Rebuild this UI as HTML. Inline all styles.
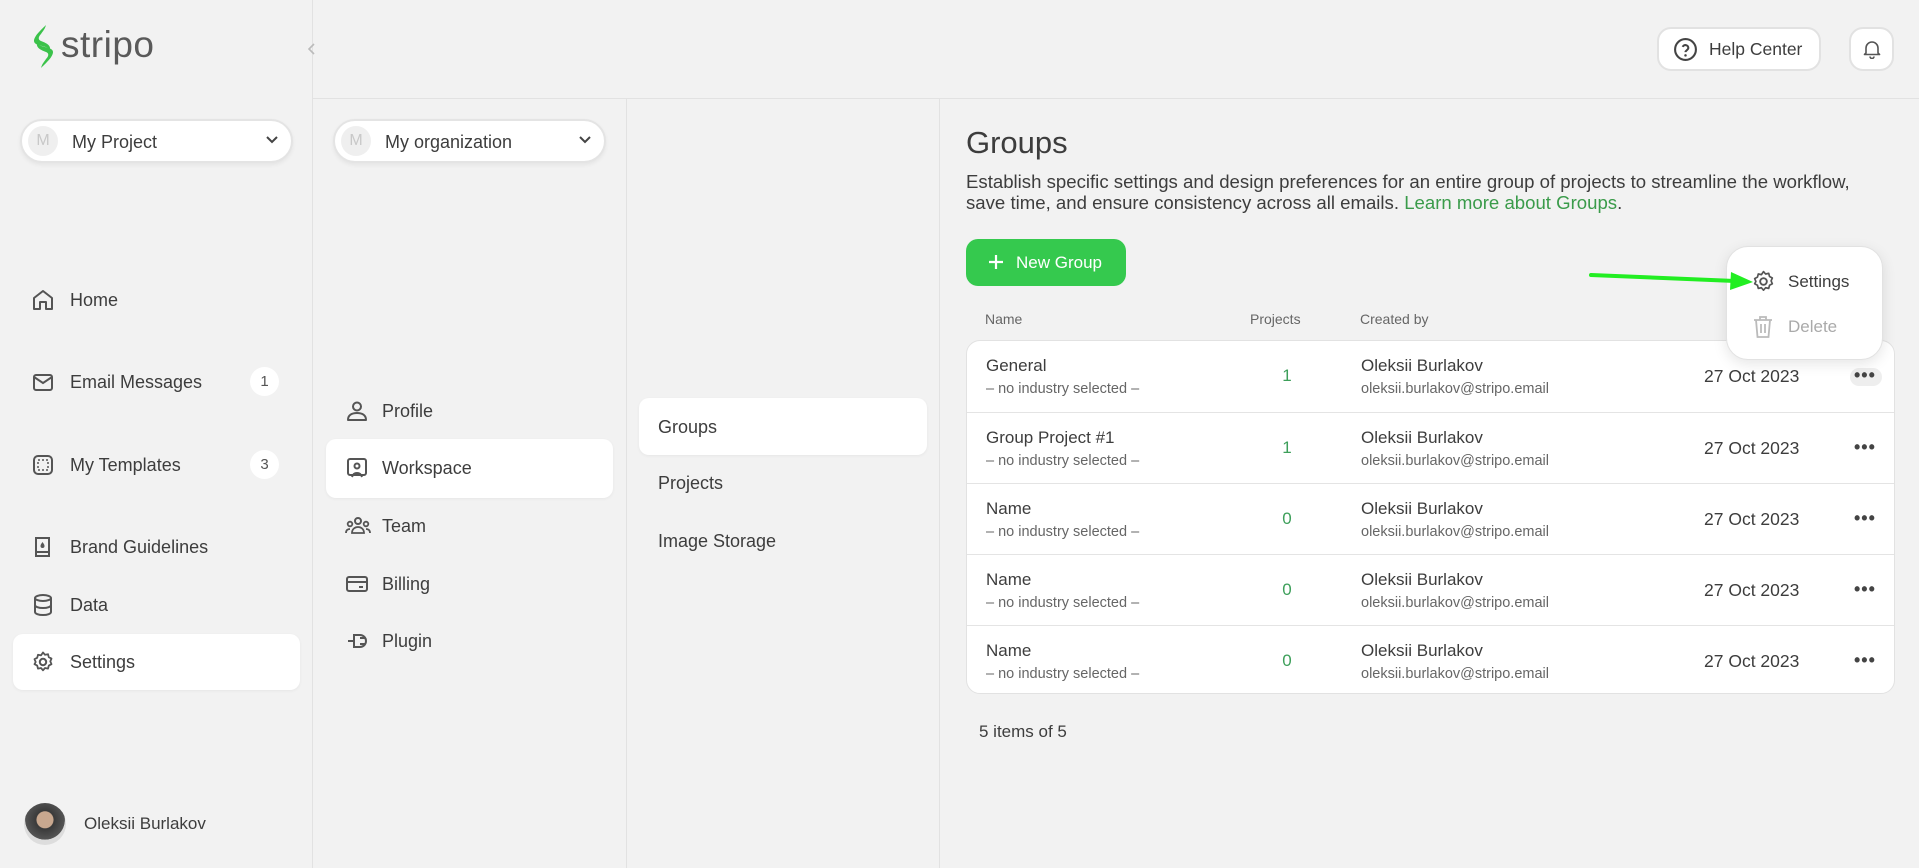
<!DOCTYPE html>
<html><head><meta charset="utf-8"><style>
*{box-sizing:border-box;margin:0;padding:0}
body{width:1919px;height:868px;background:#f2f2f2;font-family:"Liberation Sans",sans-serif;color:#3d3d3d;position:relative;overflow:hidden}
.a{position:absolute}
.vl{position:absolute;top:0;bottom:0;width:1px;background:#e2e2e2}
.dd{position:absolute;height:44px;background:#fff;border:2px solid #e4e4e4;border-radius:22px;box-shadow:0 2px 4px rgba(0,0,0,.06)}
.dd .m{position:absolute;left:6px;top:5px;width:30px;height:30px;border-radius:50%;background:#efefef;color:#c8c8c8;font-size:16px;text-align:center;line-height:30px}
.dd .t{position:absolute;left:50px;top:11px;font-size:18px;color:#3d3d3d}
.dd svg{position:absolute;right:12px;top:14px}
.nav{position:absolute;font-size:18px;color:#3d3d3d;display:flex;align-items:center}
.nav svg{position:absolute;left:0}
.act{position:absolute;background:#fff;border-radius:10px;box-shadow:0 1px 3px rgba(0,0,0,.05)}
.badge{position:absolute;width:29px;height:29px;border-radius:50%;background:#fff;font-size:15px;text-align:center;line-height:29px;color:#555}
.row{position:absolute;left:0;width:927px;height:71px;border-top:1px solid #e4e4e4}
.row:first-child{border-top:none}
.row .n{position:absolute;left:19px;top:15px;font-size:17px;color:#3d3d3d}
.row .s{position:absolute;left:19px;top:40px;font-size:14.5px;color:#666}
.row .p{position:absolute;left:310px;top:25px;font-size:17px;color:#3d9f5a;width:20px;text-align:center}
.row .c{position:absolute;left:394px;top:15px;font-size:17px;color:#3d3d3d}
.row .e{position:absolute;left:394px;top:40px;font-size:14.5px;color:#666}
.row .d{position:absolute;left:737px;top:25px;font-size:17.5px;color:#3d3d3d}
.row .k{position:absolute;left:887px;top:25px;font-size:18px;letter-spacing:1px;color:#444;font-weight:bold;line-height:18px}
</style></head><body>
<div class="vl" style="left:312px"></div>
<div class="a" style="left:312px;right:0;top:98px;height:1px;background:#e2e2e2"></div>
<div class="vl" style="left:626px;top:99px"></div>
<div class="vl" style="left:939px;top:99px"></div>

<!-- logo -->
<svg class="a" style="left:32px;top:25px" width="23" height="44" viewBox="0 0 23 44"><path d="M14 0 C9 5 2 11 2 16 C2 19 6 20 10 21 C14 22 17 23 18 25 C19 20 14 18 9 16 C6 15 6 12 9 9 C11 6 13 4 14 0Z" fill="#3bc24a"/><path d="M9 43 C14 38 21 32 21 27 C21 24 17 23 13 22 C9 21 6 20 5 18 C4 23 9 25 14 27 C17 28 17 31 14 34 C12 37 10 39 9 43Z" fill="#3bc24a"/></svg>
<div class="a" style="left:61px;top:24px;font-size:37px;color:#5a5a5a;letter-spacing:.5px">stripo</div>
<svg class="a" style="left:306px;top:42px" width="12" height="14"><path d="M8 2 L3 7 L8 12" stroke="#bbb" stroke-width="1.6" fill="none"/></svg>

<div class="dd" style="left:20px;top:119px;width:273px"><div class="m">M</div><div class="t">My Project</div><svg width="14" height="10"><path d="M2 2l5 5 5-5" stroke="#444" stroke-width="2" fill="none"/></svg></div>
<div class="dd" style="left:333px;top:119px;width:273px"><div class="m">M</div><div class="t">My organization</div><svg width="14" height="10"><path d="M2 2l5 5 5-5" stroke="#444" stroke-width="2" fill="none"/></svg></div>

<!-- sidebar nav -->
<div class="act" style="left:13px;top:634px;width:287px;height:56px"></div>
<div class="nav" style="left:31px;top:289px;height:22px;padding-left:39px"><svg width="24" height="24" viewBox="0 0 24 24"><path d="M3 21V10l9-7 9 7v11h-6v-7H9v7Z" stroke="#555" stroke-width="2" fill="none" stroke-linejoin="round"/></svg>Home</div>
<div class="nav" style="left:31px;top:371px;height:22px;padding-left:39px"><svg width="24" height="24" viewBox="0 0 24 24"><rect x="3" y="5" width="18" height="15" rx="2" stroke="#555" stroke-width="2" fill="none"/><path d="M3 7l9 6 9-6" stroke="#555" stroke-width="2" fill="none"/></svg>Email Messages</div>
<div class="badge" style="left:250px;top:367px">1</div>
<div class="nav" style="left:31px;top:454px;height:22px;padding-left:39px"><svg width="24" height="24" viewBox="0 0 24 24"><rect x="3" y="3" width="18" height="18" rx="4" stroke="#555" stroke-width="2" fill="none"/><rect x="7" y="7" width="10" height="10" stroke="#555" stroke-width="1.5" stroke-dasharray="2 2" fill="none"/></svg>My Templates</div>
<div class="badge" style="left:250px;top:450px">3</div>
<div class="nav" style="left:31px;top:536px;height:22px;padding-left:39px"><svg width="24" height="24" viewBox="0 0 24 24"><path d="M5 3h13v18H5Z M5 17h13" stroke="#555" stroke-width="2" fill="none"/><path d="M11.5 7c1.5 2 2 3 2 4a2 2 0 0 1-4 0c0-1 .5-2 2-4Z" fill="#555"/></svg>Brand Guidelines</div>
<div class="nav" style="left:31px;top:594px;height:22px;padding-left:39px"><svg width="24" height="24" viewBox="0 0 24 24"><ellipse cx="12" cy="5" rx="8" ry="3" stroke="#555" stroke-width="2" fill="none"/><path d="M4 5v14c0 1.7 3.6 3 8 3s8-1.3 8-3V5M4 12c0 1.7 3.6 3 8 3s8-1.3 8-3" stroke="#555" stroke-width="2" fill="none"/></svg>Data</div>
<div class="nav" style="left:31px;top:651px;height:22px;padding-left:39px"><svg width="24" height="24" viewBox="0 0 24 24"><circle cx="12" cy="12" r="3.2" stroke="#555" stroke-width="2" fill="none"/><path d="M12 2.5l2 2.3 3-.6.8 3 2.7 1.4-1.2 2.8 1.2 2.8-2.7 1.4-.8 3-3-.6-2 2.3-2-2.3-3 .6-.8-3-2.7-1.4L4.7 12 3.5 9.2l2.7-1.4.8-3 3 .6Z" stroke="#555" stroke-width="1.8" fill="none" stroke-linejoin="round"/></svg>Settings</div>

<div class="a" style="left:24px;top:803px;width:42px;height:42px;border-radius:50%;background:radial-gradient(circle at 50% 40%,#c9a88f 0 25%,#3a3a3a 27%,#555 60%,#ddd 61%)"></div>
<div class="a" style="left:84px;top:814px;font-size:17px;color:#3d3d3d">Oleksii Burlakov</div>

<!-- col2 -->
<div class="act" style="left:326px;top:439px;width:287px;height:59px"></div>
<div class="nav" style="left:345px;top:400px;height:22px;padding-left:37px"><svg width="24" height="24" viewBox="0 0 24 24"><circle cx="12" cy="7.5" r="4" stroke="#555" stroke-width="2" fill="none"/><path d="M3 21c0-5 4-7 9-7s9 2 9 7Z" stroke="#555" stroke-width="2" fill="none" stroke-linejoin="round"/></svg>Profile</div>
<div class="nav" style="left:345px;top:457px;height:22px;padding-left:37px"><svg width="24" height="24" viewBox="0 0 24 24"><rect x="3" y="3" width="18" height="16" rx="2" stroke="#555" stroke-width="2" fill="none"/><circle cx="12" cy="10" r="2.5" stroke="#555" stroke-width="2" fill="none"/><path d="M7 21c1-3 3-4 5-4s4 1 5 4" stroke="#555" stroke-width="2" fill="none"/></svg>Workspace</div>
<div class="nav" style="left:345px;top:515px;height:22px;padding-left:37px"><svg width="26" height="24" viewBox="0 0 26 24"><circle cx="13" cy="7" r="3" stroke="#555" stroke-width="2" fill="none"/><circle cx="5" cy="10" r="2.3" stroke="#555" stroke-width="1.8" fill="none"/><circle cx="21" cy="10" r="2.3" stroke="#555" stroke-width="1.8" fill="none"/><path d="M7 19c0-4 3-6 6-6s6 2 6 6ZM1 19c0-3 2-4 4-4M25 19c0-3-2-4-4-4" stroke="#555" stroke-width="1.8" fill="none"/></svg>Team</div>
<div class="nav" style="left:345px;top:573px;height:22px;padding-left:37px"><svg width="24" height="24" viewBox="0 0 24 24"><rect x="2" y="5" width="20" height="14" rx="2" stroke="#555" stroke-width="2" fill="none"/><path d="M2 10h20M14 15h4" stroke="#555" stroke-width="2"/></svg>Billing</div>
<div class="nav" style="left:345px;top:630px;height:22px;padding-left:37px"><svg width="24" height="24" viewBox="0 0 24 24"><path d="M9 6h6a5 5 0 0 1 0 12H9ZM15 9h5M15 15h5M9 12H3" stroke="#555" stroke-width="2" fill="none"/></svg>Plugin</div>

<!-- col3 -->
<div class="act" style="left:639px;top:398px;width:288px;height:57px"></div>
<div class="a" style="left:658px;top:417px;font-size:18px">Groups</div>
<div class="a" style="left:658px;top:473px;font-size:18px">Projects</div>
<div class="a" style="left:658px;top:531px;font-size:18px">Image Storage</div>

<!-- header buttons -->
<div class="a" style="left:1657px;top:27px;width:164px;height:44px;background:#fff;border:2px solid #e2e2e2;border-radius:14px;font-size:17.5px;line-height:40px;padding-left:50px;color:#3d3d3d">Help Center</div>
<svg class="a" style="left:1673px;top:37px" width="25" height="25" viewBox="0 0 24 24"><circle cx="12" cy="12" r="10" stroke="#444" stroke-width="2" fill="none"/><path d="M9.3 9.5a2.8 2.8 0 0 1 5.4 1c0 2-2.7 2.2-2.7 4" stroke="#444" stroke-width="2" fill="none"/><circle cx="12" cy="17.6" r="1.2" fill="#444"/></svg>
<div class="a" style="left:1849px;top:27px;width:45px;height:44px;background:#fff;border:2px solid #e2e2e2;border-radius:14px"></div>
<svg class="a" style="left:1862px;top:39px" width="20" height="20" viewBox="0 0 20 20"><path d="M4 14V9a6 6 0 0 1 12 0v5l1.5 1.5h-15ZM8 17.5a2 2 0 0 0 4 0" stroke="#555" stroke-width="1.6" fill="none" stroke-linejoin="round"/></svg>

<!-- content -->
<div class="a" style="left:966px;top:125px;font-size:31px;color:#3d3d3d">Groups</div>
<div class="a" style="left:966px;top:171px;font-size:18.6px;line-height:21px;color:#3d3d3d;white-space:nowrap">Establish specific settings and design preferences for an entire group of projects to streamline the workflow,<br>save time, and ensure consistency across all emails. <span style="color:#3a9b4a">Learn more about Groups</span>.</div>
<div class="a" style="left:966px;top:239px;width:160px;height:47px;background:#35c94e;border-radius:12px;color:#fff;font-size:17px;line-height:47px;padding-left:50px">New Group</div>
<svg class="a" style="left:988px;top:254px" width="16" height="16"><path d="M8 1v14M1 8h14" stroke="#fff" stroke-width="2.2"/></svg>

<div class="a" style="left:985px;top:311px;font-size:14px;color:#666">Name</div>
<div class="a" style="left:1250px;top:311px;font-size:14px;color:#666">Projects</div>
<div class="a" style="left:1360px;top:311px;font-size:14px;color:#666">Created by</div>

<div class="a" style="left:966px;top:340px;width:929px;height:354px;background:#fff;border:1px solid #e2e2e2;border-radius:14px;overflow:hidden">
<div class="row" style="top:0"><div class="n">General</div><div class="s">– no industry selected –</div><div class="p">1</div><div class="c">Oleksii Burlakov</div><div class="e">oleksii.burlakov@stripo.email</div><div class="d">27 Oct 2023</div><div class="a" style="left:883px;top:27px;width:32px;height:18px;border-radius:9px;background:#eee"></div><div class="k" style="top:25px">•••</div></div>
<div class="row" style="top:71px"><div class="n">Group Project #1</div><div class="s">– no industry selected –</div><div class="p">1</div><div class="c">Oleksii Burlakov</div><div class="e">oleksii.burlakov@stripo.email</div><div class="d">27 Oct 2023</div><div class="k">•••</div></div>
<div class="row" style="top:142px"><div class="n">Name</div><div class="s">– no industry selected –</div><div class="p">0</div><div class="c">Oleksii Burlakov</div><div class="e">oleksii.burlakov@stripo.email</div><div class="d">27 Oct 2023</div><div class="k">•••</div></div>
<div class="row" style="top:213px"><div class="n">Name</div><div class="s">– no industry selected –</div><div class="p">0</div><div class="c">Oleksii Burlakov</div><div class="e">oleksii.burlakov@stripo.email</div><div class="d">27 Oct 2023</div><div class="k">•••</div></div>
<div class="row" style="top:284px"><div class="n">Name</div><div class="s">– no industry selected –</div><div class="p">0</div><div class="c">Oleksii Burlakov</div><div class="e">oleksii.burlakov@stripo.email</div><div class="d">27 Oct 2023</div><div class="k">•••</div></div>
</div>
<div class="a" style="left:979px;top:722px;font-size:17px;color:#3d3d3d">5 items of 5</div>

<!-- popup -->
<div class="a" style="left:1726px;top:246px;width:157px;height:114px;background:#fff;border:1px solid #e2e2e2;border-radius:22px;box-shadow:0 4px 14px rgba(0,0,0,.1)"></div>
<svg class="a" style="left:1751px;top:269px" width="25" height="25" viewBox="0 0 24 24"><circle cx="12" cy="12" r="3.2" stroke="#555" stroke-width="1.8" fill="none"/><path d="M12 2.5l2 2.3 3-.6.8 3 2.7 1.4-1.2 2.8 1.2 2.8-2.7 1.4-.8 3-3-.6-2 2.3-2-2.3-3 .6-.8-3-2.7-1.4L4.7 12 3.5 9.2l2.7-1.4.8-3 3 .6Z" stroke="#555" stroke-width="1.6" fill="none" stroke-linejoin="round"/></svg>
<div class="a" style="left:1788px;top:272px;font-size:17px;color:#3d3d3d">Settings</div>
<svg class="a" style="left:1752px;top:314px" width="22" height="25" viewBox="0 0 22 25"><path d="M2 6h18M8 6V3h6v3M4 6l1.5 17h11L18 6M9 10v9M13 10v9" stroke="#bbb" stroke-width="1.8" fill="none"/></svg>
<div class="a" style="left:1788px;top:317px;font-size:17px;color:#aaa">Delete</div>

<!-- arrow -->
<svg class="a" style="left:1585px;top:265px" width="175" height="30"><path d="M6 10 L150 16" stroke="#22ee22" stroke-width="4" stroke-linecap="round"/><path d="M146 7 L168 17 L145 25 Z" fill="#22ee22"/></svg>
</body></html>
